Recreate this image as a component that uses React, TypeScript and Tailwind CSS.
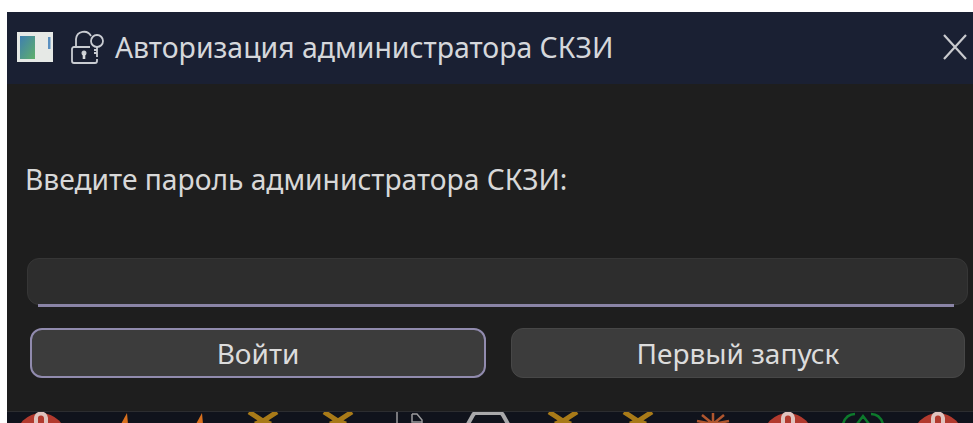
const font = { fontFamily: '"Noto Sans", "Open Sans", sans-serif' };

function AppIcon() {
  return (
    <svg width="36" height="32" viewBox="0 0 36 32" className="shrink-0">
      <defs>
        <linearGradient id="pane" x1="0" y1="0" x2="1" y2="1">
          <stop offset="0" stopColor="#3f7fb0" />
          <stop offset="1" stopColor="#5fb06a" />
        </linearGradient>
      </defs>
      <rect x="0" y="0" width="36" height="30" fill="#e6e9e6" />
      <rect x="3" y="4" width="15" height="23" fill="url(#pane)" />
      <rect x="31" y="5" width="2.5" height="12" fill="#5a90c0" />
    </svg>
  );
}

// Padlock with a small key leaning on its right side
function LockIcon() {
  return (
    <svg width="34" height="34" viewBox="0 0 34 34" fill="none" stroke="#c9ccd2" strokeWidth="1.8" className="shrink-0 mb-[2px]">
      <path d="M19 17H3a2 2 0 0 0-2 2v12a2 2 0 0 0 2 2h21a2 2 0 0 0 2-2v-2" />
      <path d="M5 17V9a8 8 0 0 1 15-3" />
      <circle cx="13" cy="23" r="1.6" fill="#d8dadd" />
      <path d="M13 24v5" strokeWidth="2.6" stroke="#d8dadd" />
      <circle cx="26" cy="11" r="6" />
      <path d="M26 17v10M23 23h3M23 20h3" />
    </svg>
  );
}

function CloseIcon() {
  return (
    <svg width="28" height="28" viewBox="0 0 28 28" fill="none" stroke="#c9cace" strokeWidth="2.2" className="shrink-0 ml-auto mb-[2px]">
      <path d="M3 2l22 24M25 2L3 26" />
    </svg>
  );
}

// Tops of the pinned apps peeking out under the dialog
function TrayIcon({ kind }: { kind: string }) {
  return (
    <svg width="60" height="12" viewBox="0 0 60 12" fill="none">
      {kind === "ya" && (
        <>
          <circle cx="30" cy="26" r="25" fill="#b23a2e" />
          <path d="M35 12V6a5 5 0 0 0-10 1v5" stroke="#e0c4bf" strokeWidth="4" />
        </>
      )}
      {kind === "flame" && <path d="M38 12l6-11 1 11z" fill="#d8701e" />}
      {kind === "x" && <path d="M16 0l14 9 14-9M22 12l8-3 8 3" stroke="#a87a18" strokeWidth="5" />}
      {kind === "doc" && <path d="M14 0v12M29 2h5l5 6v4M29 2v8h10" stroke="#9a9a9c" strokeWidth="1.5" />}
      {kind === "arc" && <path d="M10 12l5-9q1-2 3-2h24q2 0 3 2l5 9" stroke="#a9a9ab" strokeWidth="4" />}
      {kind === "sun" && (
        <path d="M30 12V1M30 12L19 3M30 12L41 3M30 12L14 9M30 12L46 9" stroke="#b0562e" strokeWidth="2.5" />
      )}
      {kind === "green" && (
        <path d="M10 12q3-10 12-10M50 12q-3-10-12-10M24 12l6-8 6 8" stroke="#0d7a2c" strokeWidth="2.5" />
      )}
    </svg>
  );
}

const tray = ["ya", "flame", "flame", "x", "x", "doc", "arc", "x", "x", "sun", "ya", "green", "ya"];

export default function App() {
  return (
    <div className="w-[973px] h-[423px] bg-white pt-3 pl-[7px] flex flex-col overflow-hidden" style={font}>
      <div className="h-[72px] bg-[#1a2033] flex items-center pl-[10px] pr-[4px] shrink-0">
        <AppIcon />
        <div className="w-[18px]" />
        <LockIcon />
        <span className="ml-[10px] pb-[2px] text-[28.4px] text-[#d5d7db] whitespace-nowrap">Авторизация администратора СКЗИ</span>
        <CloseIcon />
      </div>

      <div className="h-[327px] bg-[#1e1e1e] pl-[20px] pr-[5px] pt-[75px] shrink-0 flex flex-col">
        <p className="-ml-[2px] text-[28.2px] leading-[40px] text-[#d8d8d8] whitespace-nowrap">Введите пароль администратора СКЗИ:</p>
        <div className="mt-[59px] h-[47px] rounded-xl bg-[#2d2d2d] border border-[#363636] relative">
          <div className="absolute left-[10px] right-[13px] bottom-[-3px] h-[3px] bg-[#8a84a6]" />
        </div>
        <div className="mt-[23px] flex gap-[25px] pl-[3px] pr-[3px]">
          <button className="flex-1 h-[50px] rounded-xl bg-[#3c3c3c] border-2 border-[#918bae] text-[28px] text-[#dcdcdc]">
            Войти
          </button>
          <button className="flex-1 h-[50px] rounded-xl bg-[#3c3c3c] border border-[#474747] text-[28px] text-[#dcdcdc]">
            Первый запуск
          </button>
        </div>
      </div>

      <div className="flex-1 bg-[#10131c] border-t border-[#2c2d30] flex overflow-hidden">
        {tray.map((kind, i) => (
          <div key={i} className={`shrink-0 flex justify-center ${i === 0 ? "w-[68px]" : "w-[75px]"}`}>
            <TrayIcon kind={kind} />
          </div>
        ))}
      </div>
    </div>
  );
}
